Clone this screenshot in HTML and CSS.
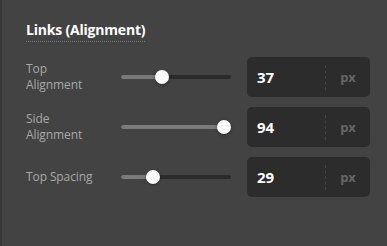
FILE: index.html
```html
<!DOCTYPE html>
<html lang="en">
<head>
  <meta charset="UTF-8">
  <meta name="viewport" content="width=device-width, initial-scale=1.0">
  <title>Links (Alignment)</title>
  <link rel="stylesheet" href="styles.css">
</head>
<body>

  <div class="panel">
    <h3 class="panel-title">Links (Alignment)</h3>

    <div class="row">
      <label class="row-label">Top<br>Alignment</label>
      <div class="slider">
        <div class="slider-fill" style="width: 37%;">
          <div class="slider-thumb"></div>
        </div>
      </div>
      <div class="num-box">
        <span class="num-value">37</span>
        <span class="num-unit">px</span>
      </div>
    </div>

    <div class="row">
      <label class="row-label">Side<br>Alignment</label>
      <div class="slider">
        <div class="slider-fill" style="width: 94%;">
          <div class="slider-thumb"></div>
        </div>
      </div>
      <div class="num-box">
        <span class="num-value">94</span>
        <span class="num-unit">px</span>
      </div>
    </div>

    <div class="row">
      <label class="row-label">Top Spacing</label>
      <div class="slider">
        <div class="slider-fill" style="width: 29%;">
          <div class="slider-thumb"></div>
        </div>
      </div>
      <div class="num-box">
        <span class="num-value">29</span>
        <span class="num-unit">px</span>
      </div>
    </div>
  </div>

</body>
</html>
```

FILE: styles.css
```css
body {
  margin: 0;
  background-color: #434343;
  font-family: 'Open Sans', sans-serif;
}

.panel {
  height: 246px;
  box-sizing: border-box;
  border-left: 2px solid #383838;
  padding: 18px 17px 0 24px;
}

.panel-title {
  display: inline-block;
  margin: 0 0 15px 0;
  padding-bottom: 1px;
  font-size: 14px;
  font-weight: 700;
  color: #fff;
  border-bottom: 1px dotted #777;
  line-height: 20px;
  letter-spacing: -0.2px;
}

.row {
  display: flex;
  align-items: center;
  height: 40px;
  margin-bottom: 10px;
}

.row-label {
  width: 95px;
  font-size: 12px;
  line-height: 16px;
  color: #a8a8a8;
  letter-spacing: -0.1px;
}

/* slider track */
.slider {
  width: 110px;
  height: 4px;
  background-color: #2b2b2b;
  border-radius: 2px;
}

.slider-fill {
  position: relative;
  height: 100%;
  background-color: #7a7a7a;
  border-radius: 2px 0 0 2px;
}

.slider-thumb {
  position: absolute;
  top: 50%;
  right: -7px;
  width: 14px;
  height: 14px;
  margin-top: -7px;
  background-color: #fff;
  border-radius: 50%;
  box-shadow: 0 1px 3px rgba(0, 0, 0, 0.4);
}

.num-box {
  display: flex;
  align-items: center;
  width: 123px;
  height: 40px;
  margin-left: 16px;
  background-color: #2c2c2c;
  border-radius: 5px;
}

.num-value {
  flex: 1;
  padding-left: 10px;
  font-size: 15px;
  font-weight: 700;
  color: #fff;
}

.num-unit {
  width: 44px;
  height: 25px;
  line-height: 25px;
  text-align: center;
  border-left: 1px dashed #444;
  font-size: 13px;
  font-weight: 700;
  color: #666;
}
```
